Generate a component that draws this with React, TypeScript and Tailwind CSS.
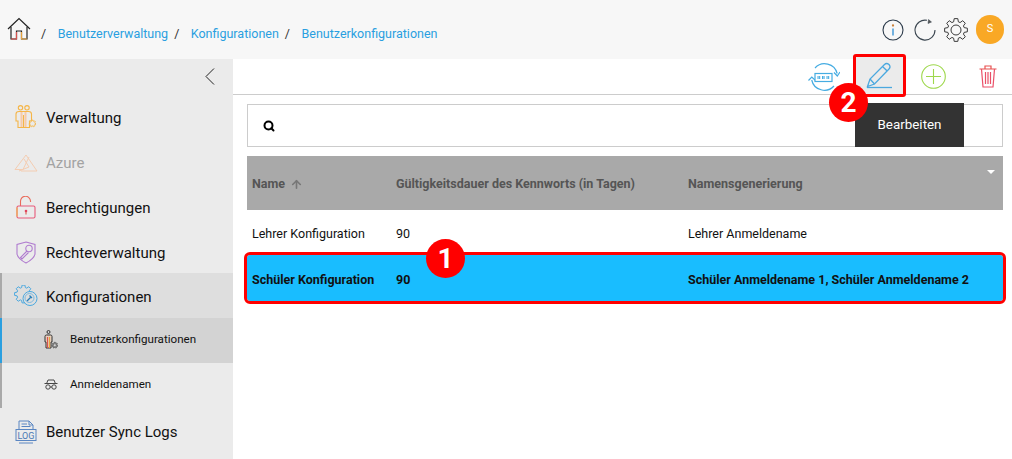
import { ArrowUp, Search } from "lucide-react";
import type { ReactNode } from "react";

// toothed outline for the gear icons
const gear = (cx: number, cy: number, outer: number, inner: number, teeth: number) => {
  const pts: string[] = [];
  const step = (Math.PI * 2) / teeth;
  for (let i = 0; i < teeth; i++) {
    const a = i * step - Math.PI / 2;
    const at = (r: number, o: number) => `${(cx + r * Math.cos(a + o)).toFixed(2)} ${(cy + r * Math.sin(a + o)).toFixed(2)}`;
    pts.push(at(inner, -step * 0.36), at(outer, -step * 0.2), at(outer, step * 0.2), at(inner, step * 0.36));
  }
  return "M" + pts.join(" L") + " Z";
};

const HomeIcon = () => (
  <svg width="24" height="24" viewBox="0 0 24 24" fill="none" strokeWidth="1.2">
    <path d="M1 12 L12 1.500 L23 12" stroke="#222" />
    <path d="M4 10 V22 H9.500 V14 H14.500 V22 H20 V10" stroke="#222" />
    <path d="M4 22 H9.500 V15" stroke="#d9534f" />
    <path d="M14.500 15 V22 H20" stroke="#e8a33d" />
  </svg>
);

const InfoIcon = () => (
  <svg width="22" height="22" viewBox="0 0 22 22" fill="none" stroke="#2b3a4a" strokeWidth="1.100">
    <circle cx="11" cy="11" r="10" />
    <path d="M11 9.500 V16.500" stroke="#3a93d5" strokeWidth="1.400" />
    <circle cx="11" cy="6.500" r="0.600" stroke="#c9803a" />
  </svg>
);

const RefreshIcon = () => (
  <svg width="22" height="22" viewBox="0 0 22 22" fill="none" stroke="#3b4650" strokeWidth="1.100">
    <path d="M13 1.300 A10 10 0 1 0 21 11" />
    <path d="M14.500 0.500 L17.500 3 L14 4.500 Z" fill="#555" strokeWidth="0.500" />
  </svg>
);

const GearIcon = () => (
  <svg width="24" height="24" viewBox="0 0 24 24" fill="none" stroke="#3a3a3a" strokeWidth="1">
    <path d={gear(12, 12, 11.500, 8.500, 8)} />
    <circle cx="12" cy="12" r="5" />
  </svg>
);

const UsersGearIcon = () => (
  <svg width="21" height="25" viewBox="0 0 21 25" fill="none" stroke="#f5b547" strokeWidth="1.100">
    <circle cx="5.500" cy="2.800" r="2.200" />
    <circle cx="12" cy="2.800" r="2.200" />
    <path d="M1 9 Q1 6.500 4 6.500 H13.500 Q16.500 6.500 16.500 9 V16 H14.500 V22.500 H3 V16 H1 Z" />
    <path d="M6.500 7 V22 M10.500 7 V22" stroke="#f7c9a8" strokeWidth="2" />
    <path d="M8.500 10 V22" />
    <path d={gear(17.500, 18.500, 3.400, 2.400, 7)} strokeWidth="0.900" fill="#ebebeb" />
  </svg>
);

const AzureIcon = () => (
  <svg width="24" height="18" viewBox="0 0 24 18" fill="none" stroke="#f4cdb2" strokeWidth="1">
    <path d="M1 15.500 L12 1 L23 17 H7" />
    <path d="M1 15.500 H9 L15 3 M5 17 L15 13 L10 5" />
  </svg>
);

const LockIcon = () => (
  <svg width="20" height="23" viewBox="0 0 20 23" fill="none" stroke="#e0584f" strokeWidth="1.100">
    <path d="M4.500 10 V5.500 A5 5 0 0 1 14.500 5 V6" stroke="#ea6a5a" />
    <rect x="1" y="10" width="18" height="12" rx="1.500" stroke="#e75a7a" />
    <path d="M1 11.500 V20.500" stroke="#f0b050" strokeWidth="1.200" />
    <circle cx="10" cy="15" r="1.300" fill="#e0405f" stroke="none" />
    <path d="M10 15.500 V18.500" />
  </svg>
);

const ShieldKeyIcon = () => (
  <svg width="20" height="23" viewBox="0 0 20 23" fill="none" stroke="#b07ccf" strokeWidth="1.100">
    <path d="M10 1 L19 3.500 V13 Q18 18 10 22 Q2 18 1 13 V3.500 Z" />
    <circle cx="13" cy="7.500" r="3.200" />
    <path d="M11 10 L4.500 16.500 L6 18 L12.500 11.500" />
  </svg>
);

const CogsIcon = () => (
  <svg width="24" height="21" viewBox="0 0 24 21" fill="none" stroke="#4aa8df" strokeWidth="1">
    <path d={gear(9.500, 9, 9, 6.700, 8)} />
    <circle cx="16" cy="13.500" r="7" fill="#dedede" />
    <circle cx="15.500" cy="13" r="4.500" stroke="#7db9e0" />
    <path d="M13 16 L17 12 M15.500 10.500 L18 13" stroke="#2a7fb8" strokeWidth="1.300" />
  </svg>
);

const UserCogIcon = () => (
  <svg width="14" height="19" viewBox="0 0 14 19" fill="none" strokeWidth="1">
    <circle cx="4.500" cy="2" r="1.500" stroke="#333" />
    <path d="M1 6.500 Q1 5 2.500 5 H6.500 Q8 5 8 6.500 V12 H7 V18 H2 V12 H1 Z" stroke="#333" fill="#e8d2c0" />
    <path d="M3.500 7 V18" stroke="#d9534f" strokeWidth="1.200" />
    <path d="M5.500 7 V18" stroke="#e8a33d" strokeWidth="1.200" />
    <path d={gear(10.800, 15.200, 3, 2.100, 7)} stroke="#555" fill="#888" strokeWidth="0.700" />
    <circle cx="10.800" cy="15.200" r="1" fill="#d3d3d3" stroke="none" />
  </svg>
);

const SpyIcon = () => (
  <svg width="14" height="11" viewBox="0 0 14 11" fill="none" stroke="#333" strokeWidth="0.900">
    <path d="M2.800 4 L4 1 H10 L11.200 4" />
    <path d="M0.500 4.500 H13.500" />
    <circle cx="4" cy="8" r="2.200" />
    <circle cx="10" cy="8" r="2.200" />
    <path d="M6.200 8 H7.800" />
  </svg>
);

const LogIcon = () => (
  <svg width="22" height="24" viewBox="0 0 22 24" fill="none" stroke="#5a86c2" strokeWidth="1">
    <path d="M4 9 V1 H14 L18 5 V9" />
    <path d="M14 1 V5 H18" />
    <path d="M6.500 4 H12 M6.500 6.500 H15.500" />
    <rect x="1" y="9.500" width="20" height="11" />
    <text x="11" y="18.500" textAnchor="middle" fontSize="9" fontFamily="Roboto, sans-serif" fill="#4a79b5" stroke="none">LOG</text>
    <path d="M4 23 H18" />
  </svg>
);

const PasswordSyncIcon = () => (
  <svg width="32" height="28" viewBox="0 0 32 28" fill="none" stroke="#45ace2" strokeWidth="1.200">
    <path d="M7 5 A13 13 0 0 1 29.200 10.500" />
    <path d="M3.700 17 A13 13 0 0 0 26 23" />
    <path d="M26 9.500 L29.300 13 L32 9 M0.500 17.500 L3.800 14 L7.500 17.500" />
    <rect x="7" y="10.500" width="17" height="8" stroke="#45ace2" fill="white" />
    <path d="M9.500 14.500 h3 M14 14.500 h3 M18.500 14.500 h3" strokeWidth="3" strokeDasharray="1 0.400" />
  </svg>
);

const PencilIcon = () => (
  <svg width="27" height="27" viewBox="0 0 27 27" fill="none" stroke="#4aa8df" strokeWidth="1.300">
    <path d="M1.500 24.500 L4 17 L18.500 2.500 Q20.500 0.500 23 2.500 Q25 5 23 7 L8.500 22 Z" />
    <path d="M4 17 L8.500 22 M16.500 4.500 L21.200 9" />
    <path d="M1 25.500 H26" />
  </svg>
);

const PlusCircleIcon = () => (
  <svg width="25" height="25" viewBox="0 0 25 25" fill="none" stroke="#9ed84c" strokeWidth="1.100">
    <circle cx="12.500" cy="12.500" r="11.800" />
    <path d="M12.500 5 V20 M5 12.500 H20" />
  </svg>
);

const TrashIcon = () => (
  <svg width="18" height="23" viewBox="0 0 18 23" fill="none" stroke="#e8504f" strokeWidth="1.200">
    <path d="M0.500 4 H17.500 M6 4 V1 H12 V4" />
    <path d="M2.500 4 L4 22 H14 L15.500 4" stroke="#ea5068" />
    <path d="M6.500 7 V19 M9 7 V19 M11.500 7 V19" stroke="#ea5068" />
  </svg>
);

const ChevronIcon = () => (
  <svg width="10" height="17" viewBox="0 0 10 17" fill="none" stroke="#222" strokeWidth="1">
    <path d="M9 0.500 L1 8.500 L9 16.500" />
  </svg>
);

const Sep = () => <span className="text-[#333] ml-[6px] mr-[11.500px]">/</span>;

const Crumb = ({ children }: { children: ReactNode }) => (
  <span className="text-[#2a9fe0]">{children}</span>
);

const NavItem = ({ icon, label, muted, className = "", labelClass = "pt-[2px]" }: { icon: ReactNode; label: string; muted?: boolean; className?: string; labelClass?: string }) => (
  <div className={"h-[45px] flex items-center " + className}>
    <div className="w-[46px] shrink-0 flex justify-center pl-[5px]">{icon}</div>
    <span className={"text-[15px] " + labelClass + " " + (muted ? "text-[#a3a3a3]" : "text-[#111]")}>{label}</span>
  </div>
);

const SubItem = ({ icon, label, active }: { icon: ReactNode; label: string; active?: boolean }) => (
  <div className={"h-[45px] flex items-center border-l-2 pb-[2px] " + (active ? "border-[#2a9fe0] bg-[#d3d3d3]" : "border-[#a9a9a9]")}>
    <div className="w-[68px] pl-[42px] flex shrink-0">{icon}</div>
    <span className="text-[11.600px] text-[#111]">{label}</span>
  </div>
);

const cols = "grid grid-cols-[144px_292px_1fr] px-[5px] items-center";

export default function App() {
  return (
    <div className="w-[1012px] h-[459px] overflow-hidden bg-white flex flex-col text-sm text-[#111] font-['Roboto',sans-serif]">
      <header className="h-[59px] shrink-0 bg-[#f7f7f7] flex items-center pl-[7px] pr-[8px]">
        <div className="mb-[1px]"><HomeIcon /></div>
        <div className="flex items-center text-[12.5px] ml-[4px] mt-[9px]">
          <Sep />
          <Crumb>Benutzerverwaltung</Crumb>
          <Sep />
          <Crumb>Konfigurationen</Crumb>
          <Sep />
          <Crumb>Benutzerkonfigurationen</Crumb>
        </div>
        <div className="ml-auto flex items-center">
          <div className="mr-[10px] flex"><InfoIcon /></div>
          <div className="mr-[8px] flex"><RefreshIcon /></div>
          <div className="mr-[8px] flex"><GearIcon /></div>
          <div className="w-[28px] h-[29px] mb-[1px] rounded-full bg-[#f9a825] text-white text-[11px] flex items-center justify-center">S</div>
        </div>
      </header>

      <div className="flex flex-1 min-h-0">
        <aside className="w-[233px] shrink-0 bg-[#ebebeb] flex flex-col">
          <div className="h-[36px] flex items-start justify-end pr-[18px] pt-[9px]">
            <ChevronIcon />
          </div>
          <NavItem icon={<UsersGearIcon />} label="Verwaltung" />
          <NavItem icon={<AzureIcon />} label="Azure" muted />
          <NavItem icon={<LockIcon />} label="Berechtigungen" />
          <NavItem icon={<ShieldKeyIcon />} label="Rechteverwaltung" />
          <NavItem icon={<CogsIcon />} label="Konfigurationen" className="bg-[#dedede] shadow-[inset_2px_0_0_#a9a9a9] -mt-[2px]" labelClass="pt-[5px]" />
          <SubItem icon={<UserCogIcon />} label="Benutzerkonfigurationen" active />
          <SubItem icon={<SpyIcon />} label="Anmeldenamen" />
          <NavItem icon={<LogIcon />} label="Benutzer Sync Logs" className="mt-[1px]" />
        </aside>

        <main className="flex-1 min-w-0 flex flex-col">
          <div className="h-[36px] shrink-0 border-b border-[#cccccc] flex items-center justify-end">
            <div className="mr-[13px] flex"><PasswordSyncIcon /></div>
            <div className="w-[53px] h-[43px] mt-[-3px] mr-[15px] flex items-center justify-center bg-[#ebebeb] border-[3px] border-[#ff0000] rounded-[3px]">
              <PencilIcon />
            </div>
            <div className="mr-[33px] flex"><PlusCircleIcon /></div>
            <div className="mr-[15px] flex"><TrashIcon /></div>
          </div>

          <div className="relative mt-[9px] ml-[14px] mr-[9px] h-[43px] border border-[#cccccc] flex items-center pl-[15px]">
            <Search size={12} strokeWidth={4} className="text-black" />
            <div className="absolute left-[607px] top-[-2px] w-[109px] h-[44px] bg-[#333333] text-white text-[13.4px] flex items-center justify-center">
              Bearbeiten
            </div>
            <div className="absolute left-[581px] top-[-22px] w-[39px] h-[39px] rounded-full bg-[#ff0000] text-white font-bold text-[28px] flex items-center justify-center">
              2
            </div>
          </div>

          <div className="mt-[9px] ml-[14px] mr-[9px] text-[12.5px]">
            <div className={cols + " h-[54px] pt-[2px] bg-[#a9a9a9] text-[#555] font-bold relative"}>
              <span className="flex items-center gap-[5px]">Name <ArrowUp size={13} strokeWidth={3} className="text-[#777]" /></span>
              <span>Gültigkeitsdauer des Kennworts (in Tagen)</span>
              <span>Namensgenerierung</span>
              <div className="absolute right-[8px] top-[14px] w-0 h-0 border-x-[4px] border-x-transparent border-t-[4px] border-t-white" />
            </div>
            <div className={cols + " h-[45px] pt-[2px]"}>
              <span>Lehrer Konfiguration</span>
              <span>90</span>
              <span>Lehrer Anmeldename</span>
            </div>
            <div className={cols + " h-[46px] pt-[3px] bg-[#19bdff] font-bold relative outline-[3.5px] outline-[#ff0000] rounded-[3px]"}>
              <span>Schüler Konfiguration</span>
              <span>90</span>
              <span>Schüler Anmeldename 1, Schüler Anmeldename 2</span>
              <div className="absolute left-[179px] top-[-16px] w-[39px] h-[39px] rounded-full bg-[#ff0000] text-white font-bold text-[28px] flex items-center justify-center">
                1
              </div>
            </div>
          </div>
        </main>
      </div>
    </div>
  );
}
